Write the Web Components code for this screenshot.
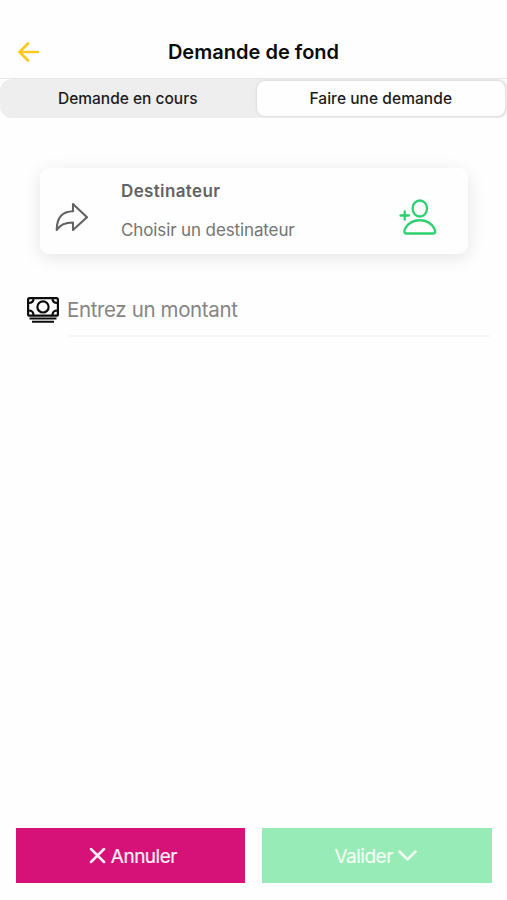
<!DOCTYPE html>
<html lang="fr">
<head>
<meta charset="utf-8">
<title>Demande de fond</title>
<style>
html,body{margin:0;height:100%;background:#fefefe}
body{font-family:Inter,"Liberation Sans",sans-serif}
</style>
</head>
<body>
<fund-request></fund-request>
<script>
const define = (name, html) => customElements.define(name, class extends HTMLElement {
  constructor() {
    super();
    const t = document.createElement('template');
    t.innerHTML = html;
    this.attachShadow({mode: 'open'}).append(t.content.cloneNode(true));
  }
});

define('app-header', `
<style>
:host{display:grid;grid-template-columns:56px 1fr 56px;align-items:center;height:79px;padding-top:26px;box-sizing:border-box;border-bottom:1px solid #e6e6e6}
svg{display:block;margin-left:18px}
h1{margin:0;text-align:center;font-size:20px;line-height:24px;font-weight:600;letter-spacing:.02px;color:#0b0b0b;white-space:nowrap}
</style>
<svg width="22" height="20" viewBox="0 0 22 20" fill="none" stroke="#fbc91c" stroke-width="2.6" stroke-linecap="round" stroke-linejoin="round"><path d="M10 1.500 1.500 10 10 18.500M1.500 10H20"/></svg>
<h1><slot></slot></h1>`);

define('segment-bar', `
<style>
:host{display:grid;grid-template-columns:1fr 1fr;height:39px;background:#eee;border-radius:12px 8px 8px 12px;padding:1px 0;box-sizing:border-box}
</style><slot></slot>`);

define('segment-tab', `
<style>
:host{display:flex;align-items:center;justify-content:center;box-sizing:border-box;font-size:15.5px;font-weight:500;line-height:20px;color:#1b1b1b;white-space:nowrap;padding:1px 0 0 2px}
:host([active]){background:#fefefe;border-radius:8px;margin:1px 2.500px 1px 3.500px;padding:0;letter-spacing:.06px;box-shadow:0 0 2px 1px #dcdcdc}
</style><slot></slot>`);

define('recipient-card', `
<style>
:host{display:grid;grid-template-columns:81px 1fr 70px;align-items:center;height:86px;margin:50px 39.500px 0 40px;background:#fefefe;border-radius:9px;box-shadow:0 4px 18px rgba(0,0,0,.10);color:#636363}
.share{display:block;margin:13px 0 0 15px}
.person{display:block;margin:12px 0 0 -.5px}
.copy{display:flex;flex-direction:column;gap:17px;white-space:nowrap;margin-top:-1px}
b{font-size:17px;line-height:22px;font-weight:600;letter-spacing:.36px}
span{font-size:17px;line-height:22px;letter-spacing:-.12px;color:#747474}
</style>
<svg class="share" width="34" height="31" viewBox="0 0 34 31" fill="none" stroke="#626262" stroke-width="2.100" stroke-linejoin="round"><path d="M18 2 32 15.300 18 28V20.500C9.500 20.500 5 22.500 1.700 28 1.700 16 7.500 9.500 18 9.300Z"/></svg>
<div class="copy"><b><slot name="title"></slot></b><span><slot></slot></span></div>
<svg class="person" width="40" height="38" viewBox="0 0 40 38" fill="none" stroke="#2dd06f" stroke-width="2.300" stroke-linecap="round" stroke-linejoin="round"><path d="M3.500 17.500H12M7.700 13.300V21.700"/><ellipse cx="22.800" cy="10.500" rx="7.200" ry="8"/><path d="M9.600 35.500C6.700 35.500 7.100 32.500 8.200 30.500 14 19.500 31.500 19.500 37.300 30.500 38.500 32.700 38.800 35.500 36 35.500Z"/></svg>`);

define('amount-field', `
<style>
:host{display:grid;grid-template-columns:41px 1fr;margin:37px 17px 0 27px;align-items:center}
svg{display:block;margin-top:-9px}
div{height:46px;box-sizing:border-box;border-bottom:2px solid #f6f6f6;font-size:20.5px;line-height:37px;color:#858585;white-space:nowrap;letter-spacing:-.37px;text-indent:-1px}
</style>
<svg width="32" height="26" viewBox="0 0 32 26" fill="none" stroke="#0c0c0c" stroke-width="2.200"><rect x="1.100" y="1.100" width="29.800" height="17.600" rx="1.500"/><circle cx="16" cy="9.900" r="5.600"/><path d="M1.500 6C5 6 6.500 4 6.500 1.500M25.500 1.500C25.500 4 27 6 30.500 6M1.500 13.500C5 13.500 6.500 15.500 6.500 18M25.500 18C25.500 15.500 27 13.500 30.500 13.500"/><path d="M2.500 21.400H29.500M5 24.700H27" stroke-width="2"/></svg>
<div><slot></slot></div>`);

define('action-button', `
<style>
:host{display:flex;align-items:center;justify-content:center;gap:5px;height:54.500px;background:var(--fill);color:var(--ink);font-size:19px;font-weight:400;line-height:24px;letter-spacing:-.5px;white-space:nowrap;padding:2px 3px 0 0;box-sizing:border-box;-webkit-text-stroke:.2px}
span{padding-top:2px}
::slotted(svg){display:block}
</style><slot name="before"></slot><span><slot></slot></span><slot name="after"></slot>`);

define('action-bar', `
<style>
:host{display:grid;grid-template-columns:1fr 1fr;gap:17px;margin:auto 15px 17.500px 15.500px}
</style><slot></slot>`);

define('fund-request', `
<style>
:host{display:flex;flex-direction:column;height:900px;overflow:hidden}
</style>
<app-header>Demande de fond</app-header>
<segment-bar><segment-tab>Demande en cours</segment-tab><segment-tab active>Faire une demande</segment-tab></segment-bar>
<recipient-card><span slot="title">Destinateur</span>Choisir un destinateur</recipient-card>
<amount-field>Entrez un montant</amount-field>
<action-bar>
<action-button style="--fill:#d61279;--ink:#fff0fa;padding-left:8px"><svg slot="before" width="17" height="17" viewBox="0 0 17 17" fill="none" stroke="#fff0fa" stroke-width="2.500" stroke-linecap="round"><path d="M2 1 15 14M15 1 2 14"/></svg>Annuler</action-button>
<action-button style="--fill:#96ebb7;--ink:#f2fff2">Valider<svg slot="after" width="19" height="13" viewBox="0 0 19 13" fill="none" stroke="#f2fff2" stroke-width="2.500" stroke-linecap="round" stroke-linejoin="round"><path d="M1.500 1.500 9.500 9.500 17.500 1.500"/></svg></action-button>
</action-bar>`);
</script>
</body>
</html>
